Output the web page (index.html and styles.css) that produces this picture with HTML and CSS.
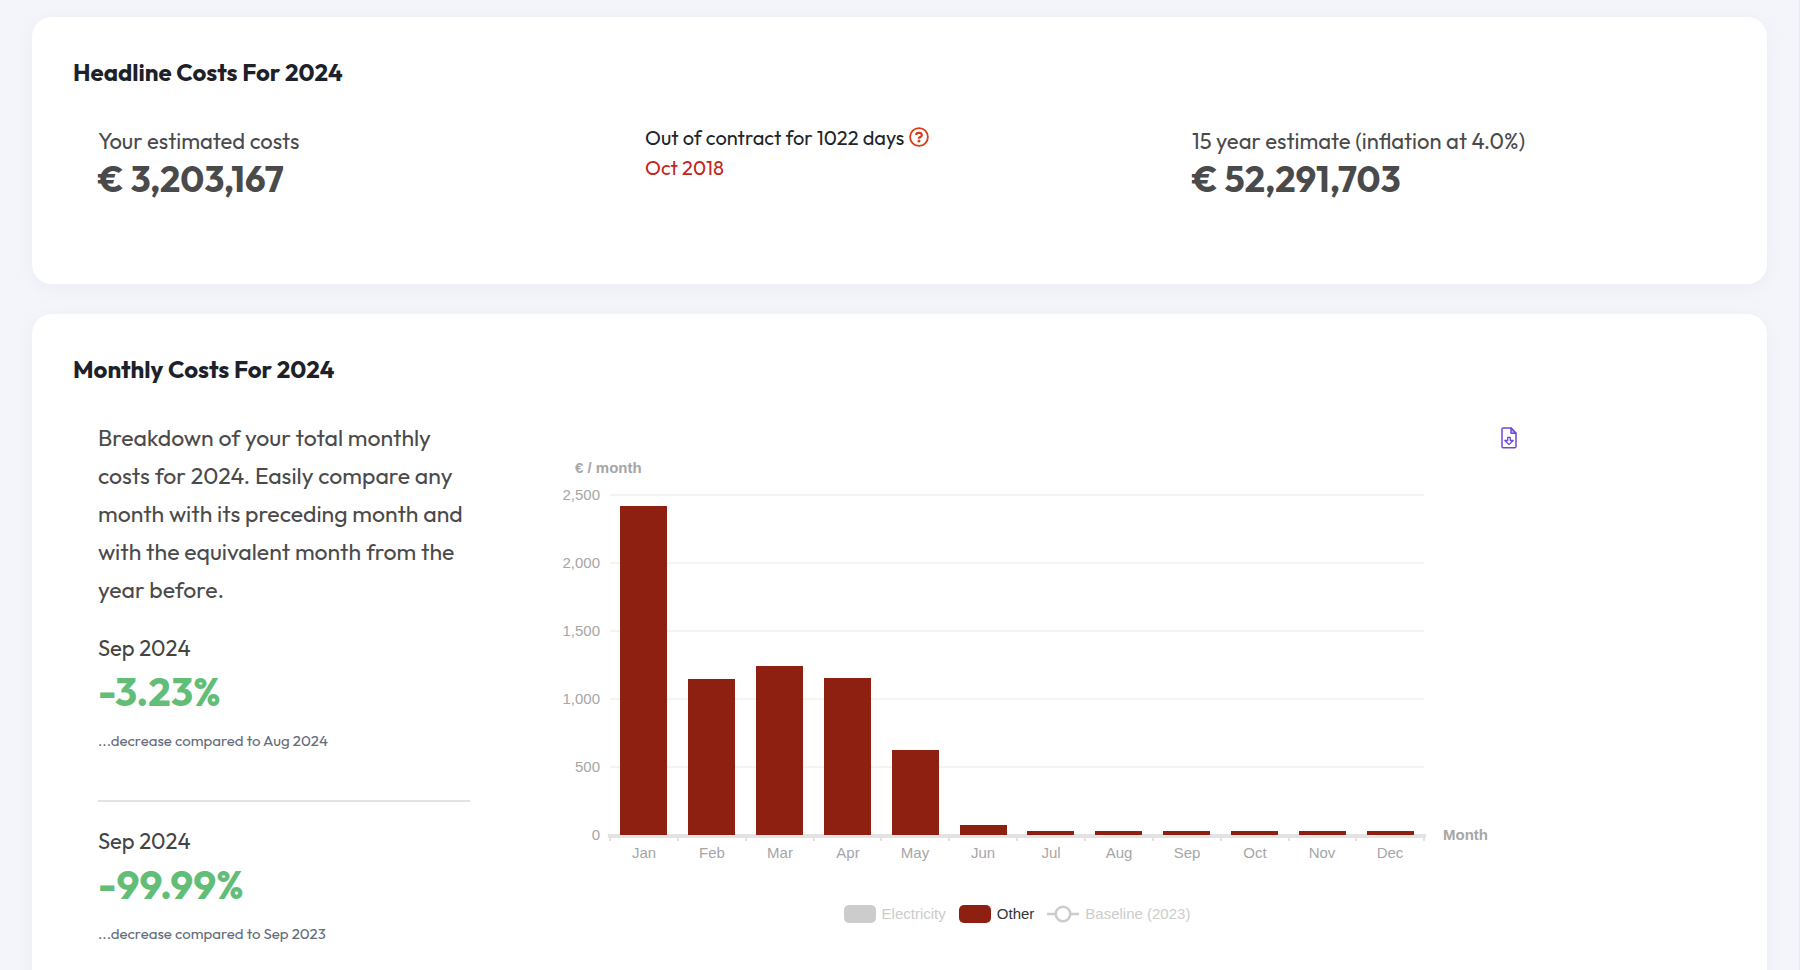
FILE: index.html
```html
<!DOCTYPE html>
<html lang="en">
<head>
<meta charset="utf-8">
<title>Costs 2024</title>
<link rel="stylesheet" href="styles.css">
</head>
<body>
<main class="page">
  <section class="card headline">
    <h2 class="card-title">Headline Costs For 2024</h2>
    <div class="headline-row">
      <div class="stat">
        <p class="stat-label">Your estimated costs</p>
        <p class="stat-value">€ 3,203,167</p>
      </div>
      <div class="contract">
        <p class="contract-status">Out of contract for 1022 days
          <button class="icon-button" type="button" aria-label="Help">
            <svg class="help-icon" viewBox="0 0 20 20" fill="none" stroke="#dc3b17" aria-hidden="true">
              <circle cx="10" cy="10" r="8.9" stroke-width="1.8"/>
              <path d="M7.200 8.100V7.600A2 2 0 0 1 9.200 5.800h1.500a2.100 2.100 0 0 1 1.100 3.900L10 10.800v.9" stroke-width="2.200"/>
              <circle cx="10" cy="14.200" r="1.400" fill="#dc3b17" stroke="none"/>
            </svg>
          </button>
        </p>
        <p class="contract-date">Oct 2018</p>
      </div>
      <div class="stat">
        <p class="stat-label">15 year estimate (inflation at 4.0%)</p>
        <p class="stat-value">€ 52,291,703</p>
      </div>
    </div>
  </section>

  <section class="card monthly">
    <h2 class="card-title">Monthly Costs For 2024</h2>
    <div class="monthly-row">
      <div class="summary">
        <p class="intro">Breakdown of your total monthly costs for 2024. Easily compare any month with its preceding month and with the equivalent month from the year before.</p>
        <div class="change">
          <p class="change-month">Sep 2024</p>
          <p class="change-value">-3.23%</p>
          <p class="change-note">...decrease compared to Aug 2024</p>
        </div>
        <hr class="divider">
        <div class="change">
          <p class="change-month">Sep 2024</p>
          <p class="change-value">-99.99%</p>
          <p class="change-note">...decrease compared to Sep 2023</p>
        </div>
      </div>

      <div class="chart">
        <div class="chart-tools">
          <button class="icon-button" type="button" aria-label="Download report">
            <svg class="file-icon" viewBox="0 0 16 22" fill="none" stroke="#7048d8" stroke-width="1.500" stroke-linejoin="round" aria-hidden="true">
              <path d="M2.200 1H10l5 5.200V19.500a1.300 1.300 0 0 1-1.300 1.300H2.200A1.300 1.300 0 0 1 1 19.500V2.300A1.300 1.300 0 0 1 2.200 1Z"/>
              <path d="M10 1V6.200H15Z" fill="#c9b8f2"/>
              <path d="M6.700 10.300h2.600v3.200h2.900L8 17.600 3.800 13.500h2.900Z" stroke-width="1.300"/>
            </svg>
          </button>
        </div>
        <svg class="plot" viewBox="0 0 1008 420" role="img" aria-label="Monthly costs in euro">
          <g class="axis-name">
            <text x="62" y="23">€ / month</text>
            <text x="930" y="390">Month</text>
          </g>
          <path class="grid" d="M97 45H911M97 113H911M97 181H911M97 249H911M97 317H911"/>
          <path class="axis" d="M95 386H913"/>
          <path class="ticks" d="M97 387v4M165 387v4M233 387v4M301 387v4M368 387v4M436 387v4M504 387v4M572 387v4M640 387v4M708 387v4M776 387v4M843 387v4M911 387v4"/>
          <g class="bars">
            <rect x="107" y="56" width="47" height="329"/>
            <rect x="175" y="229" width="47" height="156"/>
            <rect x="243" y="216" width="47" height="169"/>
            <rect x="311" y="228" width="47" height="157"/>
            <rect x="379" y="300" width="47" height="85"/>
            <rect x="447" y="375" width="47" height="10"/>
            <rect x="514" y="381" width="47" height="4"/>
            <rect x="582" y="381" width="47" height="4"/>
            <rect x="650" y="381" width="47" height="4"/>
            <rect x="718" y="381" width="47" height="4"/>
            <rect x="786" y="381" width="47" height="4"/>
            <rect x="854" y="381" width="47" height="4"/>
          </g>
          <g class="y-labels">
            <text x="87" y="50">2,500</text>
            <text x="87" y="118">2,000</text>
            <text x="87" y="186">1,500</text>
            <text x="87" y="254">1,000</text>
            <text x="87" y="322">500</text>
            <text x="87" y="390">0</text>
          </g>
          <g class="x-labels">
            <text x="131" y="408">Jan</text>
            <text x="199" y="408">Feb</text>
            <text x="267" y="408">Mar</text>
            <text x="335" y="408">Apr</text>
            <text x="402" y="408">May</text>
            <text x="470" y="408">Jun</text>
            <text x="538" y="408">Jul</text>
            <text x="606" y="408">Aug</text>
            <text x="674" y="408">Sep</text>
            <text x="742" y="408">Oct</text>
            <text x="809" y="408">Nov</text>
            <text x="877" y="408">Dec</text>
          </g>
        </svg>
        <div class="legend">
          <button class="legend-item is-off" type="button"><span class="swatch"></span>Electricity</button>
          <button class="legend-item" type="button"><span class="swatch"></span>Other</button>
          <button class="legend-item is-off" type="button">
            <svg class="line-swatch" viewBox="0 0 32 18" fill="none" stroke="#ccc" aria-hidden="true">
              <path d="M0 9H8.500M23.500 9H32" stroke-width="2.500"/>
              <circle cx="16" cy="9" r="7.300" stroke-width="2.500"/>
            </svg>Baseline (2023)</button>
        </div>
      </div>
    </div>
  </section>
</main>
</body>
</html>
```
FILE: styles.css
```css
* {
  box-sizing: border-box;
}

body {
  margin: 0;
  background: #f4f5fb;
  color: #212529;
  font-family: Outfit, Lato, "Liberation Sans", sans-serif;
}

p,
h2 {
  margin: 0;
}

.page {
  display: flex;
  flex-direction: column;
  gap: 30px;
  height: 100vh;
  overflow: hidden;
  padding: 17px 32px 0;
  border-right: 1px solid #e9eaf1;
}

.card {
  flex: none;
  padding: 39px 40px 83px;
  border-radius: 20px;
  background: #fff;
  box-shadow: 0 4px 20px rgba(40, 40, 80, 0.04);
}

.card-title {
  padding-left: 1px;
  color: #1d2129;
  font-size: 24px;
  font-weight: 700;
  line-height: 32px;
}

.headline-row {
  display: grid;
  grid-template-columns: repeat(3, 1fr);
  margin-right: -12px;
  padding: 37px 0 0 26px;
}

.stat-label {
  color: #4a4a4a;
  font-size: 22px;
  line-height: 32px;
}

.stat-value {
  color: #4a4a4a;
  font-size: 36px;
  font-weight: 700;
  line-height: 44px;
}

.contract {
  font-size: 20px;
  line-height: 30px;
  margin-top: -2px;
}

.contract-date {
  color: #c3261b;
}

.icon-button {
  display: inline-flex;
  padding: 0;
  border: 0;
  background: none;
  vertical-align: text-bottom;
  cursor: pointer;
}

.help-icon {
  width: 20px;
  height: 20px;
}

.contract .icon-button {
  padding-bottom: 3px;
}

.monthly-row {
  display: grid;
  grid-template-columns: 372fr 1008fr 163fr;
  column-gap: 43px;
  padding: 34px 0 0 26px;
}

.intro {
  color: #4a4a4a;
  font-size: 23px;
  line-height: 38px;
}

.change {
  padding-top: 23px;
}

.change-month {
  color: #444;
  font-size: 22px;
  line-height: 32px;
}

.change-value {
  padding: 5px 0 16px;
  color: #62bd77;
  font-size: 40px;
  font-weight: 700;
  line-height: 44px;
}

.change-note {
  color: #646b7a;
  font-size: 15px;
  line-height: 24px;
}

.divider {
  height: 2px;
  margin: 47px 0 0;
  border: 0;
  background: #e3e3e3;
}

.chart {
  font-family: "Liberation Sans", Arial, sans-serif;
}

.chart-tools {
  display: flex;
  justify-content: flex-end;
  padding: 8px 4px 1px 0;
}

.file-icon {
  width: 16px;
  height: 22px;
}

.plot {
  display: block;
  width: 100%;
  font-size: 15px;
}

.axis-name {
  fill: #a6a6a6;
  font-weight: 700;
}

.y-labels,
.x-labels {
  fill: #a6a6a6;
}

.y-labels {
  text-anchor: end;
}

.x-labels {
  text-anchor: middle;
}

.grid,
.ticks {
  stroke: #f4f4f4;
  stroke-width: 2;
}

.ticks {
  stroke: #e3e3e3;
}

.axis {
  stroke: #e3e3e3;
  stroke-width: 4;
}

.bars {
  fill: #8e2011;
}

.legend {
  display: flex;
  justify-content: center;
  gap: 13px;
  padding-top: 34px;
}

.legend-item {
  display: flex;
  align-items: center;
  gap: 6px;
  padding: 0;
  border: 0;
  background: none;
  color: #333;
  font: 15px/20px "Liberation Sans", Arial, sans-serif;
  cursor: pointer;
}

.swatch {
  width: 32px;
  height: 18px;
  border-radius: 5px;
  background: #8e2011;
}

.is-off {
  color: #ccc;
}

.is-off .swatch {
  background: #ccc;
}

.line-swatch {
  width: 32px;
  height: 18px;
}
```
